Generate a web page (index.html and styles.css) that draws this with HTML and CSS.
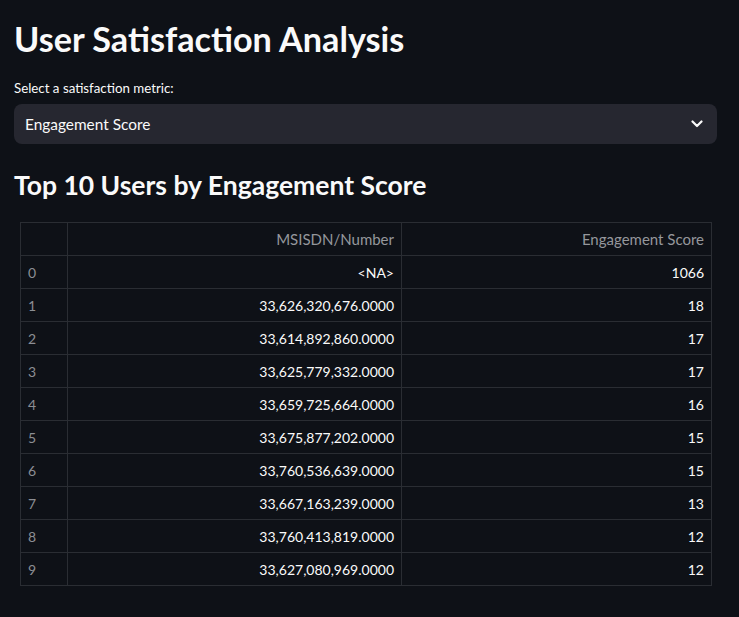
FILE: index.html
```html
<!DOCTYPE html>
<html>
<head>
<meta charset="utf-8">
<link rel="stylesheet" href="styles.css">
</head>
<body>
<main class="app">
  <h1 class="title">User Satisfaction Analysis</h1>
  <div class="field">
    <label class="label">Select a satisfaction metric:</label>
    <div class="select">
      <span class="select-value">Engagement Score</span>
      <svg class="chevron" width="12" height="8" viewBox="0 0 12 8"><path d="M1.5 1.5 L6 6 L10.5 1.5" fill="none" stroke="#fafafa" stroke-width="2.2" stroke-linecap="round" stroke-linejoin="round"/></svg>
    </div>
  </div>
  <h2 class="subtitle">Top 10 Users by Engagement Score</h2>
  <div class="grid-wrap">
    <table class="grid">
      <colgroup><col class="c-idx"><col class="c-num"><col class="c-score"></colgroup>
      <thead>
        <tr><th class="idx"></th><th>MSISDN/Number</th><th>Engagement Score</th></tr>
      </thead>
      <tbody>
        <tr><td class="idx">0</td><td>&lt;NA&gt;</td><td>1066</td></tr>
        <tr><td class="idx">1</td><td>33,626,320,676.0000</td><td>18</td></tr>
        <tr><td class="idx">2</td><td>33,614,892,860.0000</td><td>17</td></tr>
        <tr><td class="idx">3</td><td>33,625,779,332.0000</td><td>17</td></tr>
        <tr><td class="idx">4</td><td>33,659,725,664.0000</td><td>16</td></tr>
        <tr><td class="idx">5</td><td>33,675,877,202.0000</td><td>15</td></tr>
        <tr><td class="idx">6</td><td>33,760,536,639.0000</td><td>15</td></tr>
        <tr><td class="idx">7</td><td>33,667,163,239.0000</td><td>13</td></tr>
        <tr><td class="idx">8</td><td>33,760,413,819.0000</td><td>12</td></tr>
        <tr><td class="idx">9</td><td>33,627,080,969.0000</td><td>12</td></tr>
      </tbody>
    </table>
  </div>
</main>
</body>
</html>
```
FILE: styles.css
```css
html, body {
  margin: 0;
  padding: 0;
  background: #0e1117;
  color: #fafafa;
  font-family: Lato, "Noto Sans", sans-serif;
}
.app {
  padding: 14px 22px 0 14px;
}
.title {
  margin: 0;
  font-size: 34.2px;
  font-weight: 700;
  line-height: 50px;
}
.field {
  margin-top: 14px;
}
.label {
  display: block;
  font-size: 13.3px;
  line-height: 20px;
  margin-bottom: 6px;
}
.select {
  height: 40px;
  background: #262730;
  border-radius: 8px;
  display: flex;
  align-items: center;
  justify-content: space-between;
  padding: 0 14px 0 11px;
}
.select-value {
  font-size: 15.4px;
}
.chevron {
  display: block;
}
.subtitle {
  margin: 26px 0 0;
  font-size: 26.5px;
  font-weight: 700;
  line-height: 30px;
}
.grid-wrap {
  padding: 22px 6px 0 6px;
}
.grid {
  width: 692px;
  border-collapse: collapse;
  table-layout: fixed;
  font-size: 14px;
}
.c-idx { width: 47px; }
.c-num { width: 334px; }
.c-score { width: 310px; }
.grid th, .grid td {
  border: 1px solid #2a2d33;
  height: 32px;
  padding: 0 7px;
  text-align: right;
  white-space: nowrap;
}
.grid th {
  font-weight: 400;
  font-size: 15px;
  color: #95979c;
}
.grid td.idx, .grid th.idx {
  text-align: left;
  color: #8c8e94;
}
```
